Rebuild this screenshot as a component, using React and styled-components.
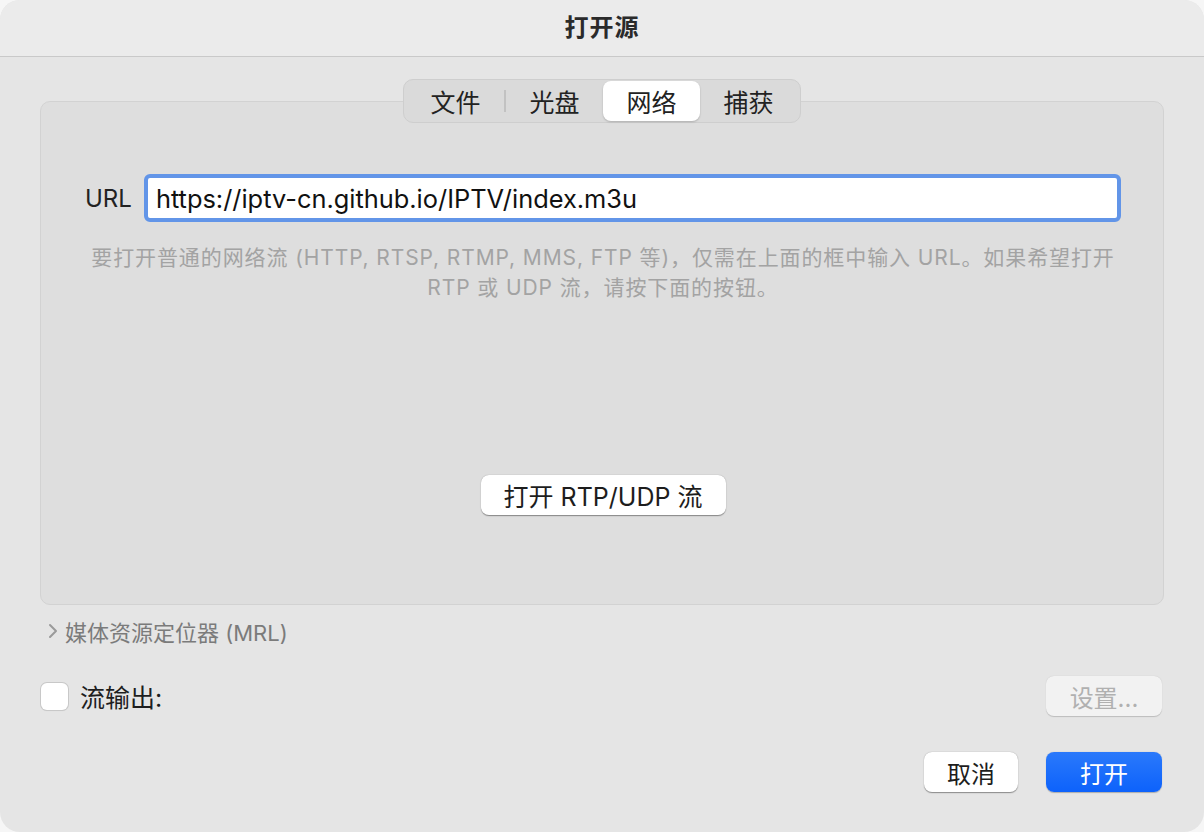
import React from 'react'
import styled, { createGlobalStyle } from 'styled-components'

const Global = createGlobalStyle`
  html, body {
    margin: 0;
    padding: 0;
    background: #f6f6f6;
  }
  * { box-sizing: border-box; }
`

const FONT = `"Inter", "Noto Sans CJK SC", sans-serif`

const Window = styled.div`
  width: 1204px;
  height: 832px;
  border-radius: 20px;
  overflow: hidden;
  background: #e5e5e5;
  font-family: ${FONT};
  color: #1e1e1e;
  display: flex;
  flex-direction: column;
`

const TitleBar = styled.div`
  height: 57px;
  padding-bottom: 5px;
  background: #ebebeb;
  border-bottom: 1px solid #c9c9c9;
  display: flex;
  align-items: center;
  justify-content: center;
  font-size: 24px;
  letter-spacing: 1px;
  font-weight: 600;
  color: #2a2a2a;
`

const Body = styled.div`
  flex: 1;
  padding: 22px 40px 0 40px;
  display: flex;
  flex-direction: column;
`

const TabWrap = styled.div`
  display: flex;
  justify-content: center;
  margin-bottom: -22px;
  position: relative;
  z-index: 1;
`

const Segmented = styled.div`
  display: flex;
  align-items: center;
  height: 44px;
  padding: 2px 3px;
  background: #dadada;
  border: 1px solid #cecece;
  border-radius: 10px;
`

const Tab = styled.div`
  width: 97px;
  height: 40px;
  display: flex;
  align-items: center;
  justify-content: center;
  font-size: 25px;
  border-radius: 8px;
  color: #222;
  background: ${p => (p.active ? '#ffffff' : 'transparent')};
  box-shadow: ${p => (p.active ? '0 1px 2px rgba(0,0,0,0.2)' : 'none')};
`

const TabSep = styled.div`
  width: 2px;
  height: 22px;
  background: #c2c2c2;
`

const Panel = styled.div`
  height: 504px;
  background: #dedede;
  border: 1px solid #d2d2d2;
  border-radius: 10px;
  display: flex;
  flex-direction: column;
  padding: 72px 42px 0 44px;
`

const UrlRow = styled.div`
  display: flex;
  align-items: center;
  gap: 12px;
`

const Label = styled.div`
  font-size: 24px;
  color: #222;
`

const UrlInput = styled.div`
  flex: 1;
  height: 48px;
  background: #fff;
  border: 4px solid #6295e8;
  border-radius: 6px;
  display: flex;
  align-items: center;
  padding-left: 8px;
  font-size: 25.4px;
  color: #111;
`

const Hint = styled.div`
  margin-top: 21px;
  text-align: center;
  font-size: 21px;
  letter-spacing: 0.9px;
  line-height: 30px;
  color: #a3a3a3;
`

const CenterRow = styled.div`
  display: flex;
  justify-content: center;
  margin-top: 172px;
`

const Button = styled.div`
  height: 40px;
  width: ${p => p.w}px;
  display: flex;
  align-items: center;
  justify-content: center;
  border-radius: 8px;
  font-size: ${p => p.fs || 24}px;
  background: #ffffff;
  color: #1d1d1d;
  box-shadow: 0 0.5px 1px rgba(0,0,0,0.35), 0 1px 2px rgba(0,0,0,0.08);
`

const DisabledButton = styled(Button)`
  background: #f2f2f2;
  color: #b0b0b0;
  box-shadow: 0 0.5px 1px rgba(0,0,0,0.18);
`

const PrimaryButton = styled(Button)`
  background: linear-gradient(#2a79fb, #0d62fb);
  color: #ffffff;
  box-shadow: 0 0.5px 1px rgba(0,0,0,0.25);
`

const Disclosure = styled.div`
  margin-top: 10px;
  display: flex;
  align-items: center;
  gap: 7px;
  padding-left: 8px;
  font-size: 22px;
  color: #7b7b7b;
`

const StreamRow = styled.div`
  margin-top: 29px;
  display: flex;
  align-items: center;
  justify-content: space-between;
  padding-right: 2px;
`

const CheckLabel = styled.div`
  display: flex;
  align-items: center;
  gap: 12px;
  font-size: 25px;
  color: #1e1e1e;
`

const Checkbox = styled.div`
  width: 27px;
  height: 27px;
  background: #fff;
  border-radius: 6px;
  box-shadow: 0 0 0 1px #c8c8c8, 0 1px 1px rgba(0,0,0,0.1);
  margin-left: 1px;
`

const Footer = styled.div`
  margin-top: 36px;
  display: flex;
  justify-content: flex-end;
  gap: 28px;
  padding-right: 2px;
`

export default function App() {
  return (
    <Window>
      <Global />
      <TitleBar>打开源</TitleBar>
      <Body>
        <TabWrap>
          <Segmented>
            <Tab>文件</Tab>
            <TabSep />
            <Tab>光盘</Tab>
            <Tab active>网络</Tab>
            <Tab>捕获</Tab>
          </Segmented>
        </TabWrap>
        <Panel>
          <UrlRow>
            <Label>URL</Label>
            <UrlInput>https://iptv-cn.github.io/IPTV/index.m3u</UrlInput>
          </UrlRow>
          <Hint>
            要打开普通的网络流 (HTTP, RTSP, RTMP, MMS, FTP 等)，仅需在上面的框中输入 URL。如果希望打开
            <br />
            RTP 或 UDP 流，请按下面的按钮。
          </Hint>
          <CenterRow>
            <Button w={245} fs={25}>打开 RTP/UDP 流</Button>
          </CenterRow>
        </Panel>
        <Disclosure>
          <svg width="10" height="16" viewBox="0 0 10 16">
            <path d="M2 2 L8 8 L2 14" fill="none" stroke="#9a9a9a" strokeWidth="2" strokeLinecap="round" strokeLinejoin="round" />
          </svg>
          媒体资源定位器 (MRL)
        </Disclosure>
        <StreamRow>
          <CheckLabel>
            <Checkbox />
            流输出:
          </CheckLabel>
          <DisabledButton w={116}>设置...</DisabledButton>
        </StreamRow>
        <Footer>
          <Button w={94}>取消</Button>
          <PrimaryButton w={116}>打开</PrimaryButton>
        </Footer>
      </Body>
    </Window>
  )
}
